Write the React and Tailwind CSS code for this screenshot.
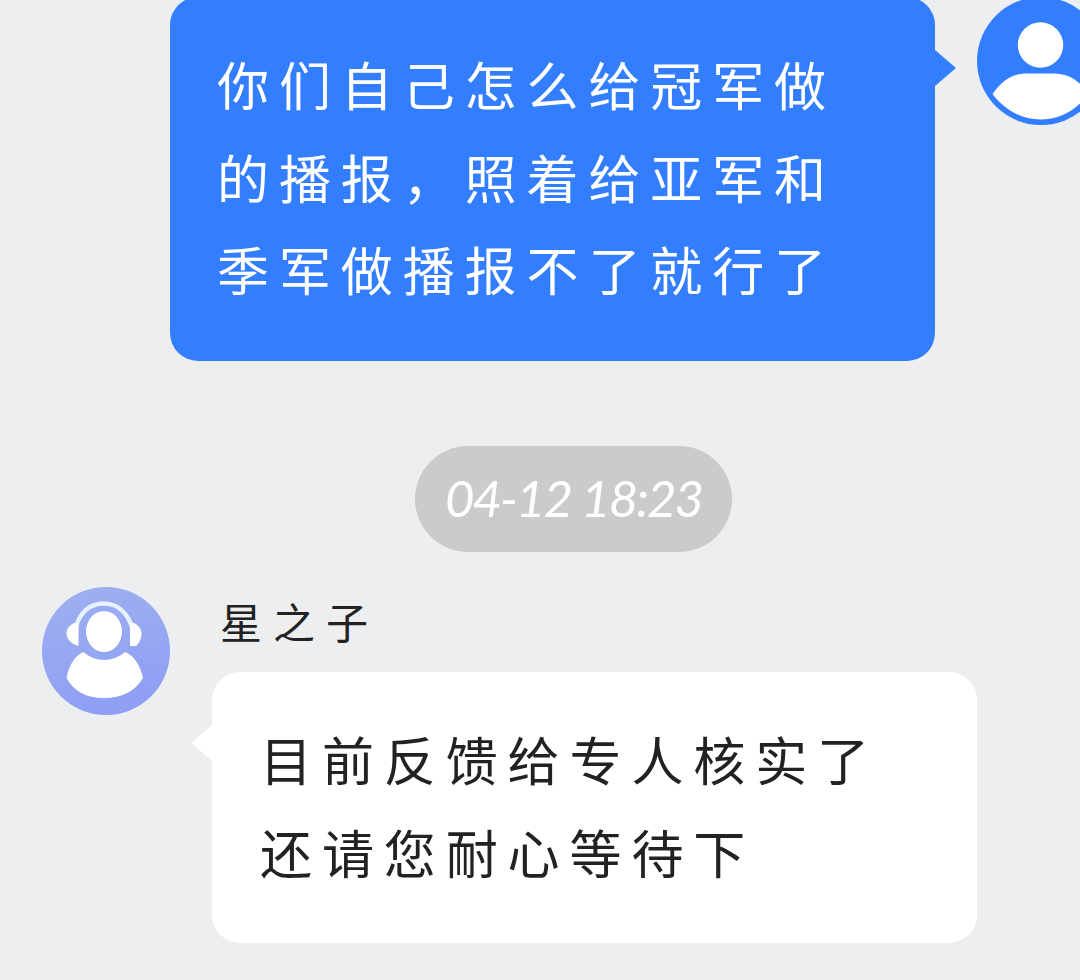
import React from 'react';

const outgoing = ['你们自己怎么给冠军做', '的播报，照着给亚军和', '季军做播报不了就行了'];
const incoming = ['目前反馈给专人核实了', '还请您耐心等待下'];

const UserAvatar = () => (
  <svg viewBox="0 0 128 128" className="w-32 h-32 shrink-0">
    <circle cx="64" cy="64" r="64" fill="#337eff" />
    <circle cx="63.5" cy="48" r="22.7" fill="#fff" />
    <path d="M15.5 97C25 83 36 76.500 50 76.500H77C91 76.500 102 83 111.500 97C99 113.500 82 122.500 63.500 122.500C45 122.500 28 113.500 15.500 97Z" fill="#fff" />
  </svg>
);

const AgentAvatar = () => (
  <svg viewBox="0 0 128 128" className="w-32 h-32 shrink-0">
    <defs>
      <linearGradient id="agent-bg" x1="0" y1="0" x2="0.25" y2="1">
        <stop offset="0" stopColor="#9eb1ef" />
        <stop offset="1" stopColor="#8f9ff5" />
      </linearGradient>
    </defs>
    <circle cx="64" cy="64" r="64" fill="url(#agent-bg)" />
    {/* headset */}
    <path d="M34 40C38 25 48 16.500 61.500 16.500C75 16.500 85 25 90 40" fill="none" stroke="#e6f2fd" strokeWidth="4.500" />
    <path d="M36.500 36V59C29 57 24.500 52 24.500 46.500C24.500 42 27.500 38.500 32 36Z" fill="#fff" />
    <path d="M88 36V59H94C97.500 56 99.500 51 99.500 46.500C99.500 42 96.500 38.500 92 36Z" fill="#fff" />
    {/* head and shoulders */}
    <ellipse cx="62" cy="44.500" rx="18" ry="20.500" fill="#fff" />
    <path d="M41.500 65C53 75.500 71 75.500 83 65C92 68.500 98 78 101 91C93 104.500 80 111 62 111C44 111 32 104.500 24.500 91C27 78 33 68.500 41.500 65Z" fill="#fff" />
  </svg>
);

const MessageLines = ({ lines }) => (
  <div className="text-[52px] leading-[92.7px] tracking-[9.9px] whitespace-nowrap">
    {lines.map(line => (
      <p key={line}>{line}</p>
    ))}
  </div>
);

const App = () => {
  return (
    <div className="w-[1080px] h-[980px] overflow-hidden bg-[#eceef0] font-['Noto_Sans_CJK_SC',sans-serif] font-normal">
      {/* Outgoing message */}
      <div className="flex items-start gap-[42px] pl-[170px] -mt-[3px]">
        <div className="relative w-[765px] h-[364px] shrink-0 rounded-[28px] bg-[#337eff] pl-[47px] pt-[41px] text-white">
          <MessageLines lines={outgoing} />
          <svg viewBox="0 0 21 36" className="absolute left-full top-[53px] w-[21px] h-9">
            <path d="M0 0L21 18L0 36Z" fill="#337eff" />
          </svg>
        </div>
        <UserAvatar />
      </div>

      {/* Timestamp */}
      <div className="flex mt-[85px] ml-[415px] w-[317px] h-[106px] items-center justify-center rounded-full bg-[#cacbcd] pb-1">
        <time className="font-['Lato',sans-serif] font-normal italic text-[51px] leading-none tracking-[-2px] text-white whitespace-nowrap">
          04-12 18:23
        </time>
      </div>

      {/* Incoming message */}
      <div className="flex items-start gap-[42px] pl-[42px] mt-[35px]">
        <AgentAvatar />
        <div className="text-[#222]">
          <p className="ml-2 h-[85px] text-[42px] leading-[68px] tracking-[11px]">星之子</p>
          <div className="relative w-[765px] h-[271px] rounded-[28px] bg-white pl-[48px] pt-[41px]">
            <MessageLines lines={incoming} />
            <svg viewBox="0 0 21 36" className="absolute right-full top-[53px] w-[21px] h-9">
              <path d="M21 0L0 18L21 36Z" fill="#fff" />
            </svg>
          </div>
        </div>
      </div>
    </div>
  );
};

export default App;
